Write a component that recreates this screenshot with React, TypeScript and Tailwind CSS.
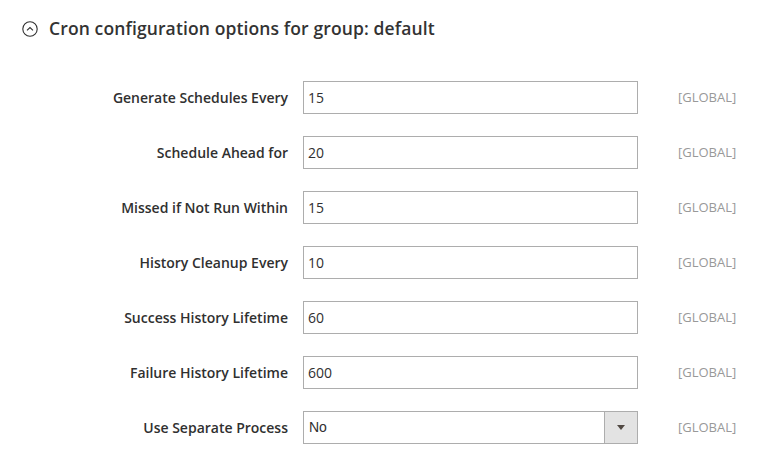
const rows: { label: string; value: string; select?: boolean }[] = [
  { label: 'Generate Schedules Every', value: '15' },
  { label: 'Schedule Ahead for', value: '20' },
  { label: 'Missed if Not Run Within', value: '15' },
  { label: 'History Cleanup Every', value: '10' },
  { label: 'Success History Lifetime', value: '60' },
  { label: 'Failure History Lifetime', value: '600' },
  { label: 'Use Separate Process', value: 'No', select: true },
]

function CollapseIcon() {
  return (
    <svg width="16" height="16" viewBox="0 0 16 16" className="shrink-0">
      <circle cx="8" cy="8" r="7.2" fill="none" stroke="#303030" strokeWidth="1.1" />
      <path d="M5 9.3 L8 6.5 L11 9.3" fill="none" stroke="#303030" strokeWidth="1.1" />
    </svg>
  )
}

export default function App() {
  return (
    <div
      className="w-[764px] h-[470px] bg-white text-[#303030] overflow-hidden"
      style={{ fontFamily: '"Open Sans", sans-serif' }}
    >
      {/* Section title */}
      <div className="flex items-center gap-[11px] pl-[22px] pt-[16px] h-[42px]">
        <CollapseIcon />
        <span className="text-[17.5px] font-semibold leading-none tracking-[0.12px] text-[#333333]">
          Cron configuration options for group: default
        </span>
      </div>

      {/* Fields */}
      <div className="flex flex-col gap-[22px] pt-[39px]">
        {rows.map((r) => (
          <div key={r.label} className="flex items-center h-[33px]">
            <label className="w-[288px] text-right text-[14px] font-semibold">{r.label}</label>
            <div className="ml-[15px] w-[335px] h-[33px]">
              {r.select ? (
                <div className="flex h-full border border-[#adadad] bg-white">
                  <span
                    className="flex-1 flex items-center pl-[5px] text-[14px]"
                    style={{ fontFamily: '"Liberation Sans", Arial, sans-serif' }}
                  >
                    {r.value}
                  </span>
                  <span className="w-[33px] flex items-center justify-center bg-[#e3e3e3] border-l border-[#adadad]">
                    <span className="w-0 h-0 border-l-[4px] border-r-[4px] border-t-[5px] border-l-transparent border-r-transparent border-t-[#514943]" />
                  </span>
                </div>
              ) : (
                <div className="flex items-center h-full border border-[#adadad] pl-[4px] text-[14px]">
                  {r.value}
                </div>
              )}
            </div>
            <span className="ml-[40px] text-[13px] text-[#999999]">[GLOBAL]</span>
          </div>
        ))}
      </div>
    </div>
  )
}
